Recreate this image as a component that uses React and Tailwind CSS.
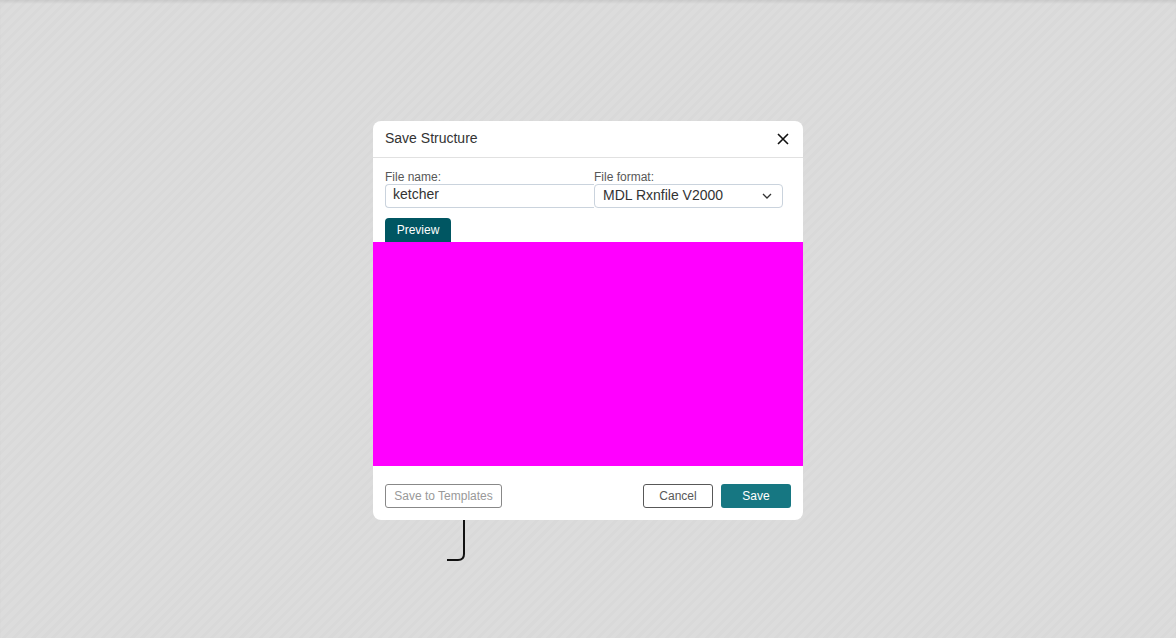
export default function App() {
  return (
    <div
      className="relative w-[1176px] h-[638px] overflow-hidden bg-[repeating-linear-gradient(135deg,#dcdcdc_0px,#dcdcdc_4px,#d9d9d9_4px,#d9d9d9_7px)] shadow-[inset_0_3px_3px_-1px_rgba(0,0,0,0.08)]"
      style={{ fontFamily: '"Liberation Sans", Arial, sans-serif' }}
    >
      <svg className="absolute left-[440px] top-[518px]" width="30" height="46" viewBox="0 0 30 46">
        <path d="M24 2 V36 Q24 42 18 42 H7" fill="none" stroke="#111" strokeWidth="2" />
      </svg>
      <div className="absolute left-[373px] top-[121px] w-[430px] h-[399px] bg-white rounded-[8px] flex flex-col">
        <div className="h-[37px] flex items-center justify-between pl-[12px] pr-[12px] pb-[1px] border-b border-[#e1e1e1]">
          <span className="text-[14px] text-[#333]">Save Structure</span>
          <svg width="14" height="14" viewBox="0 0 14 14" className="mr-[1px]">
            <path d="M2 2 L12 12 M12 2 L2 12" stroke="#111" strokeWidth="1.6" />
          </svg>
        </div>
        <div className="px-[12px] pt-[12px] flex">
          <div className="flex flex-col w-[209px]">
            <label className="text-[12px] leading-[14px] text-[#585858]">File name:</label>
            <div className="h-[24px] border border-r-0 border-[#cad3dd] rounded-l-[4px] flex items-center pl-[7px] pb-[3px] text-[14px] text-[#333]">
              ketcher
            </div>
          </div>
          <div className="flex flex-col w-[189px]">
            <label className="text-[12px] leading-[14px] text-[#585858]">File format:</label>
            <div className="h-[24px] border border-[#cad3dd] rounded-[4px] flex items-center justify-between pl-[8px] pr-[10px] pb-[1px] text-[14px] text-[#333]">
              <span>MDL Rxnfile V2000</span>
              <svg width="10" height="6" viewBox="0 0 10 6">
                <path d="M1 1 L5 5 L9 1" fill="none" stroke="#333" strokeWidth="1.3" />
              </svg>
            </div>
          </div>
        </div>
        <div className="px-[12px] pt-[10px] flex">
          <div className="w-[66px] h-[24px] bg-[#005662] rounded-t-[4px] flex items-center justify-center text-[12px] text-white">
            Preview
          </div>
        </div>
        <div className="h-[224px] bg-[#ff00ff]"></div>
        <div className="flex items-center justify-between px-[12px] pt-[18px]">
          <div className="h-[24px] w-[117px] border border-[#888] rounded-[3px] flex items-center justify-center text-[12px] text-[#999]">
            Save to Templates
          </div>
          <div className="flex gap-[8px]">
            <div className="h-[24px] w-[70px] border border-[#585858] rounded-[3px] flex items-center justify-center text-[12px] text-[#585858]">
              Cancel
            </div>
            <div className="h-[24px] w-[70px] bg-[#167782] rounded-[3px] flex items-center justify-center text-[12px] text-white">
              Save
            </div>
          </div>
        </div>
      </div>
    </div>
  );
}
